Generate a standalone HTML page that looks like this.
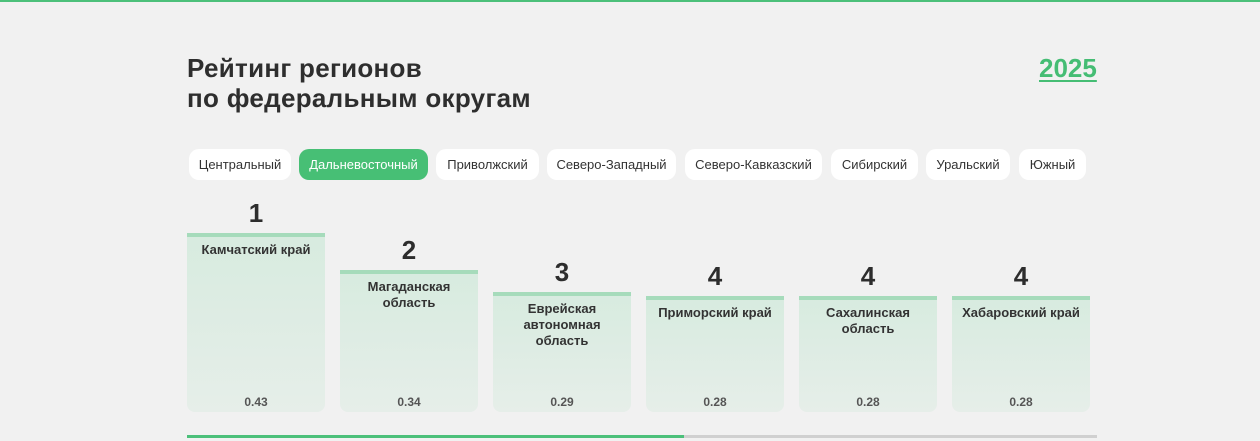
<!DOCTYPE html>
<html><head><meta charset="utf-8"><style>
*{margin:0;padding:0;box-sizing:border-box}
body{width:1260px;height:441px;background:#f1f1f1;font-family:"Liberation Sans","DejaVu Sans",sans-serif;color:#2b2b2b;position:relative;overflow:hidden}
.topline{position:absolute;left:0;top:0;width:1260px;height:2px;background:#4cc07a}
h1{position:absolute;left:187px;top:53px;font-size:26px;line-height:30px;font-weight:bold;letter-spacing:0.3px;color:#2e2e2e}
.year{position:absolute;left:1039px;top:53px;font-size:26px;font-weight:bold;color:#45bd74;text-decoration:underline;text-decoration-thickness:2px;text-underline-offset:3px}
.tab{position:absolute;top:149px;height:31px;border-radius:10px;background:#fff;font-size:13px;line-height:31px;text-align:center;color:#333}
.tab.on{background:#47bf75;color:#fff}
.col{position:absolute;width:138px;bottom:29px;background:linear-gradient(#d7ebdf,#e6eee9);border-radius:0 0 8px 8px;text-align:center}
.col .bar{height:4px;background:#a6dbbb}
.col .n{font-size:13px;font-weight:bold;line-height:16px;margin-top:5px;color:#333}
.col .v{position:absolute;bottom:3px;width:100%;font-size:12px;font-weight:bold;color:#555}
.rank{position:absolute;width:138px;text-align:center;font-size:26px;font-weight:bold;color:#2d2d2d}
.pb{position:absolute;top:435px;left:187px;width:910px;height:3px;background:#d0d0d0}
.pb div{width:497px;height:3px;background:#4cc07a}
</style></head><body>
<div class="topline"></div>
<h1>Рейтинг регионов<br>по федеральным округам</h1>
<div class="year">2025</div>
<div class="tab" style="left:189px;width:102px">Центральный</div>
<div class="tab on" style="left:299px;width:129px">Дальневосточный</div>
<div class="tab" style="left:436px;width:103px">Приволжский</div>
<div class="tab" style="left:547px;width:129px">Северо-Западный</div>
<div class="tab" style="left:685px;width:137px">Северо-Кавказский</div>
<div class="tab" style="left:831px;width:87px">Сибирский</div>
<div class="tab" style="left:926px;width:84px">Уральский</div>
<div class="tab" style="left:1019px;width:67px">Южный</div>

<div class="rank" style="left:187px;top:198px">1</div>
<div class="rank" style="left:340px;top:235px">2</div>
<div class="rank" style="left:493px;top:257px">3</div>
<div class="rank" style="left:646px;top:261px">4</div>
<div class="rank" style="left:799px;top:261px">4</div>
<div class="rank" style="left:952px;top:261px">4</div>

<div class="col" style="left:187px;top:233px"><div class="bar"></div><div class="n">Камчатский край</div><div class="v">0.43</div></div>
<div class="col" style="left:340px;top:270px"><div class="bar"></div><div class="n">Магаданская<br>область</div><div class="v">0.34</div></div>
<div class="col" style="left:493px;top:292px"><div class="bar"></div><div class="n">Еврейская<br>автономная<br>область</div><div class="v">0.29</div></div>
<div class="col" style="left:646px;top:296px"><div class="bar"></div><div class="n">Приморский край</div><div class="v">0.28</div></div>
<div class="col" style="left:799px;top:296px"><div class="bar"></div><div class="n">Сахалинская<br>область</div><div class="v">0.28</div></div>
<div class="col" style="left:952px;top:296px"><div class="bar"></div><div class="n">Хабаровский край</div><div class="v">0.28</div></div>
<div class="pb"><div></div></div>
</body></html>
